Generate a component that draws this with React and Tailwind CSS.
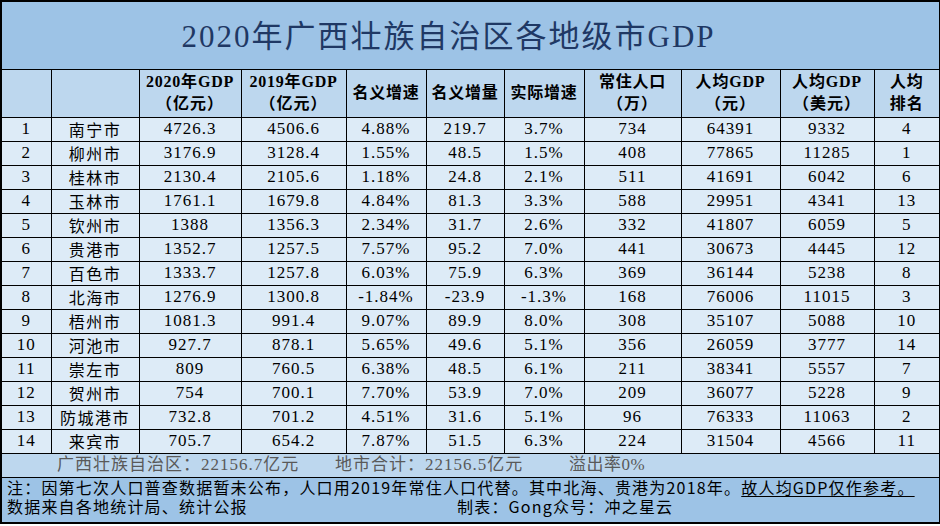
const rows = [
  [1, "南宁市", "4726.3", "4506.6", "4.88%", "219.7", "3.7%", "734", "64391", "9332", "4"],
  [2, "柳州市", "3176.9", "3128.4", "1.55%", "48.5", "1.5%", "408", "77865", "11285", "1"],
  [3, "桂林市", "2130.4", "2105.6", "1.18%", "24.8", "2.1%", "511", "41691", "6042", "6"],
  [4, "玉林市", "1761.1", "1679.8", "4.84%", "81.3", "3.3%", "588", "29951", "4341", "13"],
  [5, "钦州市", "1388", "1356.3", "2.34%", "31.7", "2.6%", "332", "41807", "6059", "5"],
  [6, "贵港市", "1352.7", "1257.5", "7.57%", "95.2", "7.0%", "441", "30673", "4445", "12"],
  [7, "百色市", "1333.7", "1257.8", "6.03%", "75.9", "6.3%", "369", "36144", "5238", "8"],
  [8, "北海市", "1276.9", "1300.8", "-1.84%", "-23.9", "-1.3%", "168", "76006", "11015", "3"],
  [9, "梧州市", "1081.3", "991.4", "9.07%", "89.9", "8.0%", "308", "35107", "5088", "10"],
  [10, "河池市", "927.7", "878.1", "5.65%", "49.6", "5.1%", "356", "26059", "3777", "14"],
  [11, "崇左市", "809", "760.5", "6.38%", "48.5", "6.1%", "211", "38341", "5557", "7"],
  [12, "贺州市", "754", "700.1", "7.70%", "53.9", "7.0%", "209", "36077", "5228", "9"],
  [13, "防城港市", "732.8", "701.2", "4.51%", "31.6", "5.1%", "96", "76333", "11063", "2"],
  [14, "来宾市", "705.7", "654.2", "7.87%", "51.5", "6.3%", "224", "31504", "4566", "11"],
];

const widths = [50, 88, 102, 105, 80, 78, 80, 97, 99, 94, 66];

const head = [
  ["", ""],
  ["", ""],
  ["2020年GDP", "（亿元）"],
  ["2019年GDP", "（亿元）"],
  ["名义增速", ""],
  ["名义增量", ""],
  ["实际增速", ""],
  ["常住人口", "（万）"],
  ["人均GDP", "（元）"],
  ["人均GDP", "（美元）"],
  ["人均", "排名"],
];

const serif = "font-['Liberation_Serif','Noto_Sans_CJK_SC',serif]";
const sans = "font-['Noto_Sans_CJK_SC','Noto_Sans',sans-serif]";

export default function App() {
  return (
    <div className="w-[940px] h-[526px] bg-white">
      <table className={`table-fixed border-collapse border-2 border-black w-[939px] ${serif}`}>
        <colgroup>
          {widths.map((w, i) => (
            <col key={i} style={{ width: w }} />
          ))}
        </colgroup>
        <tbody>
          <tr className="h-[68px] bg-[#9dc3e6]">
            <td colSpan={11} className="border-b border-black pr-[44px] pt-[3px] text-center">
              <span className="text-[31px] tracking-[2px] text-[#1f3864]">
                2020年广西壮族自治区各地级市GDP
              </span>
            </td>
          </tr>
          <tr className="h-[48px] bg-[#bdd7ee]">
            {head.map(([a, b], i) => (
              <td
                key={i}
                className="border border-black p-0 text-center align-middle font-bold text-[16px] leading-[22px] text-black"
              >
                <div className="tracking-[0.8px]">{a}</div>
                {b && <div className="tracking-[1px]">{b}</div>}
              </td>
            ))}
          </tr>
          {rows.map((r) => (
            <tr key={r[0]} className="h-[24px] bg-[#ddebf7]">
              {r.map((v, i) => (
                <td
                  key={i}
                  className={`border border-black text-center leading-[22px] p-0 text-black ${
                    i === 1
                      ? `${sans} text-[16px] tracking-[1.5px] text-[#262626]`
                      : "text-[17px] tracking-[1px]"
                  }`}
                >
                  {v}
                </td>
              ))}
            </tr>
          ))}
          <tr className="h-[24px] bg-[#bdd7ee]">
            <td colSpan={11} className="border border-black p-0 text-[17px] leading-[22px] text-[#595959]">
              <div className="flex">
                <span className="w-[333px] pl-[55px] tracking-[1px]">广西壮族自治区：22156.7亿元</span>
                <span className="w-[234px] tracking-[1px]">地市合计：22156.5亿元</span>
                <span className="tracking-[0.5px]">溢出率0%</span>
              </div>
            </td>
          </tr>
          <tr className="h-[46px] bg-[#9dc3e6]">
            <td
              colSpan={11}
              className={`border border-black px-[5px] pb-[3px] align-top text-[16px] leading-[19px] tracking-[1.2px] text-black ${sans}`}
            >
              <div>
                注：因第七次人口普查数据暂未公布，人口用2019年常住人口代替。其中北海、贵港为2018年。
                <span className="underline underline-offset-2">故人均GDP仅作参考。</span>
              </div>
              <div className="flex">
                <span className="w-[450px]">数据来自各地统计局、统计公报</span>
                <span>制表：Gong众号：冲之星云</span>
              </div>
            </td>
          </tr>
        </tbody>
      </table>
    </div>
  );
}
